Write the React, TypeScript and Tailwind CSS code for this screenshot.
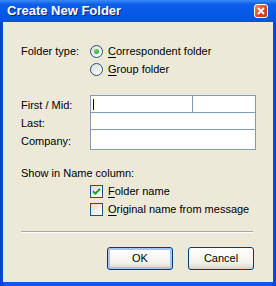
import React from 'react';

const font = { fontFamily: '"Liberation Sans", Arial, sans-serif' };

const Radio: React.FC<{ checked?: boolean; label: string; hotkey: string }> = ({ checked, label, hotkey }) => (
  <div className="h-[18px] flex items-center gap-[5px]">
    <div className="w-[13px] h-[13px] rounded-full border border-[#1C5180] bg-[linear-gradient(135deg,#DCDCD7,#FFFFFF)] flex items-center justify-center">
      {checked && <div className="w-[5px] h-[5px] rounded-full bg-[radial-gradient(circle_at_35%_35%,#6CD36C,#1E9E1E)]" />}
    </div>
    <span>
      <span className="underline underline-offset-[2px]">{hotkey}</span>
      {label}
    </span>
  </div>
);

const Checkbox: React.FC<{ checked?: boolean; label: string; hotkey: string }> = ({ checked, label, hotkey }) => (
  <div className="h-[18px] flex items-center gap-[5px]">
    <div className="w-[13px] h-[13px] border border-[#1C5180] bg-[linear-gradient(135deg,#DCDCD7,#FFFFFF)] flex items-center justify-center">
      {checked && (
        <svg width="9" height="9" viewBox="0 0 9 9">
          <path d="M1 4.2 L3.4 6.6 L8 1.8" fill="none" stroke="#21A121" strokeWidth="2" />
        </svg>
      )}
    </div>
    <span>
      <span className="underline underline-offset-[2px]">{hotkey}</span>
      {label}
    </span>
  </div>
);

const Button: React.FC<{ label: string; isDefault?: boolean }> = ({ label, isDefault }) => (
  <div
    className={
      'w-[66px] h-[23px] rounded-[3px] border border-[#003C74] bg-[linear-gradient(to_bottom,#FFFFFF,#F3F2EC_70%,#D8D3C8)] flex items-center justify-center ' +
      (isDefault ? 'shadow-[inset_0_0_0_2px_#A9C4F1]' : '')
    }
  >
    {label}
  </div>
);

export default function App() {
  return (
    <div className="w-[276px] h-[286px] flex flex-col bg-[linear-gradient(to_right,#0640D0,#0B5AEB_2%,#0B5AEB_98%,#0640D0)]" style={font}>
      {/* Title bar */}
      <div className="h-[22px] flex items-center pl-[7px] pr-[8px] bg-[linear-gradient(to_bottom,#3B8AF6,#0C5EEB_20%,#0558E8_60%,#0A52DC)]">
        <span className="flex-1 text-white font-bold text-[13px] [text-shadow:1px_1px_0_#0A247A]">Create New Folder</span>
        <div className="w-[14px] h-[14px] rounded-[3px] border border-white bg-[linear-gradient(135deg,#F08A63,#D5451E_60%,#C03A18)] flex items-center justify-center">
          <svg width="8" height="8" viewBox="0 0 8 8">
            <path d="M1 1 L7 7 M7 1 L1 7" stroke="white" strokeWidth="1.8" />
          </svg>
        </div>
      </div>

      {/* Body */}
      <div className="flex-1 mx-[3px] mb-[4px] bg-[#ECE9D8] text-[11px] text-black pl-[18px] pt-[20px] flex flex-col">
        <div className="grid grid-cols-[69px_1fr]">
          <div className="h-[18px] flex items-center">Folder type:</div>
          <div>
            <Radio checked hotkey="C" label="orrespondent folder" />
            <Radio hotkey="G" label="roup folder" />
          </div>
        </div>

        <div className="grid grid-cols-[69px_1fr] mt-[17px]">
          <div className="flex flex-col pt-[1px]">
            <div className="h-[18px] flex items-center">First / Mid:</div>
            <div className="h-[18px] flex items-center">Last:</div>
            <div className="h-[18px] flex items-center">Company:</div>
          </div>
          <div className="w-[166px] border border-[#7F9DB9] bg-white flex flex-col">
            <div className="h-[17px] flex border-b border-[#7F9DB9]">
              <div className="w-[102px] border-r border-[#7F9DB9] flex items-center pl-[2px]">
                <div className="w-[1px] h-[11px] bg-black" />
              </div>
              <div className="flex-1" />
            </div>
            <div className="h-[17px] border-b border-[#7F9DB9]" />
            <div className="h-[17px]" />
          </div>
        </div>

        <div className="mt-[16px] h-[14px] flex items-center">Show in Name column:</div>
        <div className="pl-[69px] mt-[2px]">
          <Checkbox checked hotkey="F" label="older name" />
          <Checkbox hotkey="O" label="riginal name from message" />
        </div>

        <div className="mt-[13px] mr-[20px] border-t border-[#ACA899] border-b border-b-white" />

        <div className="mt-[14px] mr-[19px] flex justify-end gap-[15px]">
          <Button label="OK" isDefault />
          <Button label="Cancel" />
        </div>
      </div>
    </div>
  );
}
